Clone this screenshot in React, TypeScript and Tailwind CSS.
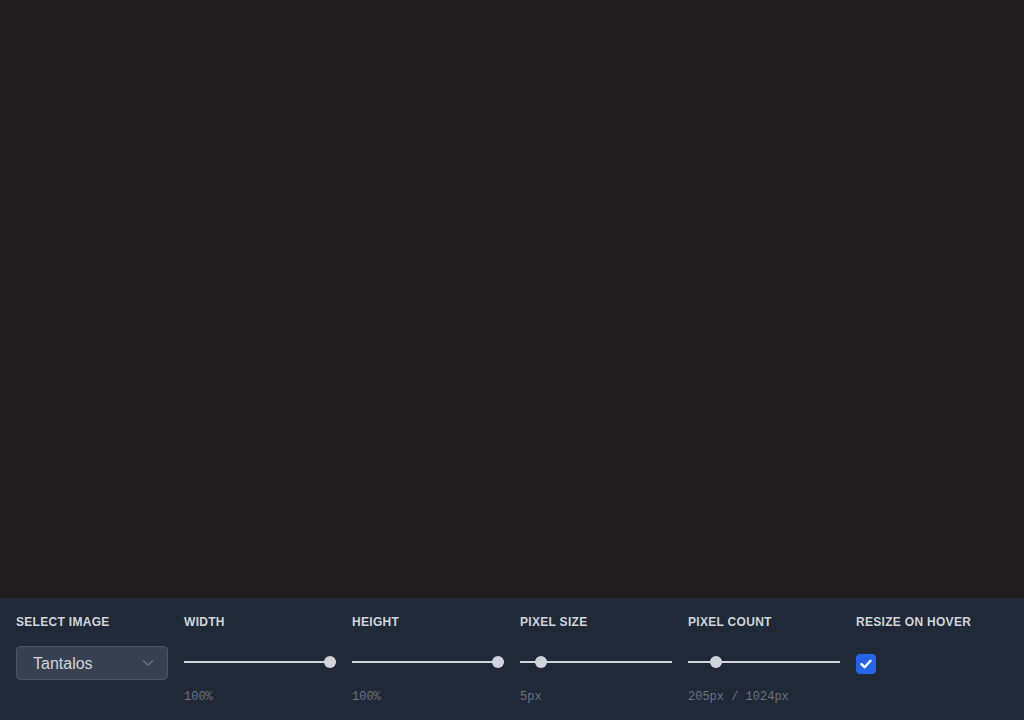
import React from "react";

function Label({ children }: { children: React.ReactNode }) {
  return (
    <div className="text-xs leading-4 font-bold uppercase text-[#d1d5db] tracking-wide whitespace-nowrap">
      {children}
    </div>
  );
}

function Slider({ fraction }: { fraction: number }) {
  return (
    <div className="relative w-full h-3 mb-[2px] flex items-center">
      <div className="w-full h-[2px] bg-[#d1d5db]" />
      <div
        className="absolute top-0 w-3 h-3 rounded-full bg-[#d1d5db]"
        style={{ left: `calc(${fraction} * (100% - 12px))` }}
      />
    </div>
  );
}

function Value({ children }: { children?: React.ReactNode }) {
  return (
    <div
      className="mt-[9px] h-4 text-xs leading-4 text-[#6b7280] whitespace-nowrap"
      style={{ fontFamily: '"Liberation Mono", monospace' }}
    >
      {children}
    </div>
  );
}

export default function App() {
  const sliders = [
    { label: "Width", fraction: 1, value: "100%" },
    { label: "Height", fraction: 1, value: "100%" },
    { label: "Pixel Size", fraction: 0.107, value: "5px" },
    { label: "Pixel Count", fraction: 0.157, value: "205px / 1024px" },
  ];
  return (
    <div
      className="w-[1024px] h-[720px] flex flex-col bg-[#1f1d1e]"
      style={{ fontFamily: '"Liberation Sans", Arial, sans-serif' }}
    >
      <div className="h-[598px] bg-[#1f1d1e]" />
      <div className="flex-1 bg-[#1f2937] px-4 pt-4 grid grid-cols-6 gap-4">
        <div className="flex flex-col">
          <Label>Select Image</Label>
          <div className="mt-4 h-[34px] rounded border border-[#4b5563] bg-[#374151] flex items-center justify-between pl-4 pr-[13px]">
            <span className="text-base text-[#d1d5db] mt-[1px]">Tantalos</span>
            <svg width="12" height="8" viewBox="0 0 12 8" fill="none">
              <path d="M1 1.5 L6 6 L11 1.5" stroke="#6b7280" strokeWidth="1.5" />
            </svg>
          </div>
          <Value />
        </div>
        {sliders.map((s) => (
          <div key={s.label} className="flex flex-col">
            <Label>{s.label}</Label>
            <div className="mt-4 h-[34px] flex items-center">
              <Slider fraction={s.fraction} />
            </div>
            <Value>{s.value}</Value>
          </div>
        ))}
        <div className="flex flex-col">
          <Label>Resize on hover</Label>
          <div className="mt-4 h-[34px] flex items-center">
            <div className="w-5 h-5 mt-[2px] rounded bg-[#2563eb] flex items-center justify-center">
              <svg width="12" height="10" viewBox="0 0 12 10" fill="none">
                <path d="M1.5 5.2 L4.6 8.2 L10.5 1.8" stroke="white" strokeWidth="2.4" strokeLinecap="round" strokeLinejoin="round" />
              </svg>
            </div>
          </div>
          <Value />
        </div>
      </div>
    </div>
  );
}
